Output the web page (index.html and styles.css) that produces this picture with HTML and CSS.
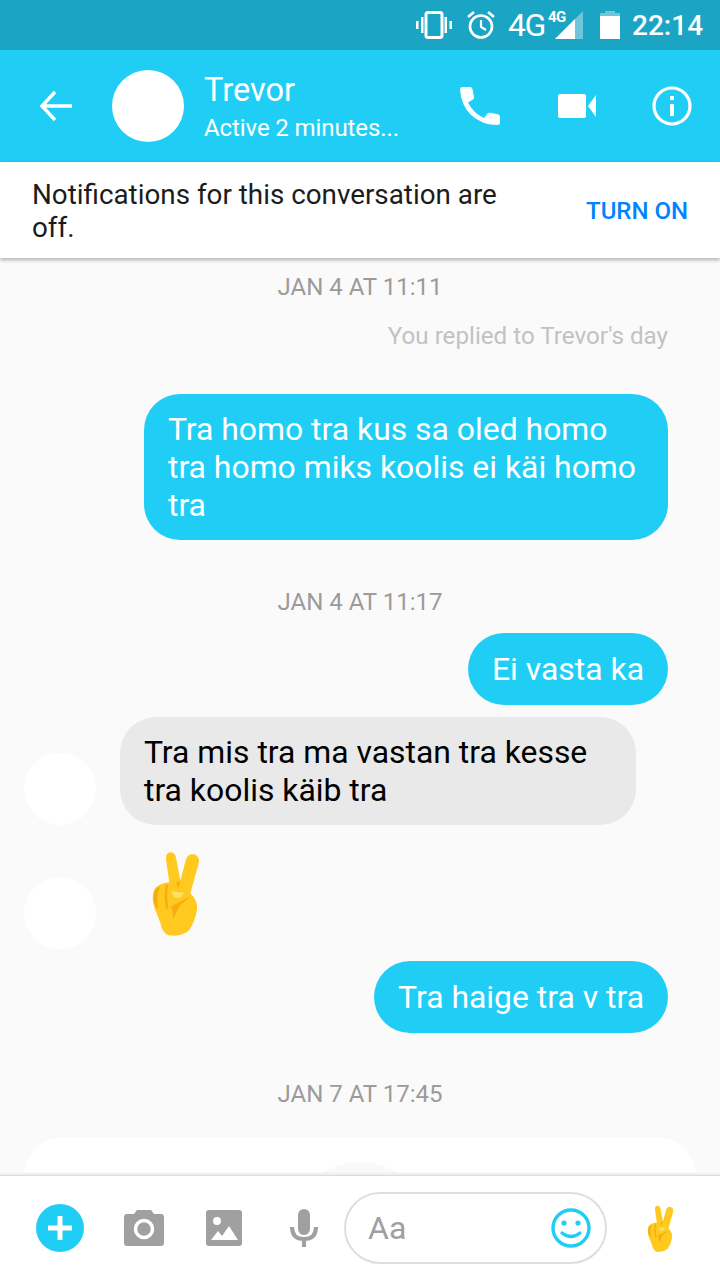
FILE: index.html
```html
<!DOCTYPE html>
<html lang="et">
<head>
    <meta charset="UTF-8">
    <meta name="viewport" content="width=device-width, initial-scale=1.0">
    <title>Trevor</title>
    <link rel="stylesheet" href="styles.css">
</head>
<body>
    <svg class="defs" width="0" height="0">
        <symbol id="peace" viewBox="0 0 270 315">
            <path fill="#ffc91f" d="M108 58Q106 38 122 37Q136 37 139 58L151 122L168 58Q174 40 192 43Q211 49 206 70L181 160Q204 182 201 208Q196 245 176 272Q150 292 116 286Q96 278 91 248L74 205Q64 178 72 150Q84 130 118 127Z"/>
            <path fill="#f5ae10" d="M151 122L145 148L139 128ZM84 142Q70 150 70 175Q72 195 80 205L86 206Q76 175 90 140Z"/>
            <path fill="#f5ae10" d="M108 132Q100 165 108 206L116 206Q108 170 114 136ZM122 200L184 168L150 196L130 236L126 208Z"/>
            <path fill="#ffdf66" d="M124 154L164 158L152 172L134 174Z"/>
        </symbol>
    </svg>

    <div class="status-bar">
        <svg class="ic-vibrate" width="36" height="28" viewBox="0 0 36 28">
            <rect x="10" y="1.500" width="16" height="25" rx="2" fill="none" stroke="#fff" stroke-width="3"/>
            <path fill="#fff" d="M0 10h2.500v8H0zM5 6h2.500v16H5zM28.500 6H31v16h-2.500zM33.500 10H36v8h-2.500z"/>
        </svg>
        <svg class="ic-alarm" width="28" height="28" viewBox="0 0 28 28">
            <circle cx="14" cy="15.500" r="11" fill="none" stroke="#fff" stroke-width="2.600"/>
            <path d="M14 9v7l5 3" fill="none" stroke="#fff" stroke-width="2.200"/>
            <path d="M1 6l6-5M27 6l-6-5" fill="none" stroke="#fff" stroke-width="2.600"/>
        </svg>
        <span class="net">4G</span>
        <span class="net-small">4G</span>
        <svg class="ic-signal" width="28" height="28" viewBox="0 0 28 28">
            <path fill="#6fc6da" d="M28 0v28H0z"/>
            <path fill="#fff" d="M20 8v20H0z"/>
        </svg>
        <svg class="ic-battery" width="20" height="28" viewBox="0 0 20 28">
            <path fill="#6fc6da" d="M5 0h10v2h5v4H0V2h5z"/>
            <path fill="#fff" d="M0 5h20v23H0z"/>
        </svg>
        <span class="clock">22:14</span>
    </div>

    <div class="top-bar">
        <svg class="ic-back" width="34" height="32" viewBox="0 0 34 32">
            <path d="M16 2L3 16l13 14M3 16h30" fill="none" stroke="#fff" stroke-width="3.400"/>
        </svg>
        <div class="top-avatar"></div>
        <div class="top-title">
            <div class="top-name">Trevor</div>
            <div class="top-active">Active 2 minutes...</div>
        </div>
        <svg class="ic-phone" width="40" height="38" viewBox="0 0 40 38">
            <path fill="#fff" d="M2 0h8q2 0 2.500 2l1.500 8q.2 1.500-1 2.600L8 15.500Q13 26 24 31l3.500-4.500q1.200-1 2.500-.7l8 1.500q2 .5 2 2.500V36q0 2-2.500 2Q22 38 11 28 1 18 0 2.500 0 0 2 0z"/>
        </svg>
        <svg class="ic-video" width="38" height="24" viewBox="0 0 38 24">
            <rect width="28" height="24" rx="2" fill="#fff"/>
            <path fill="#fff" d="M30 12L38 1v22z"/>
        </svg>
        <svg class="ic-info" width="40" height="40" viewBox="0 0 40 40">
            <circle cx="20" cy="20" r="18" fill="none" stroke="#fff" stroke-width="3.200"/>
            <path fill="#fff" d="M18 10h4v4h-4zM18 18h4v12h-4z"/>
        </svg>
    </div>

    <div class="notice">
        <div class="notice-text">Notifications for this conversation are off.</div>
        <div class="notice-btn">TURN ON</div>
    </div>

    <div class="chat">
        <div class="date date-first">JAN 4 AT 11:11</div>
        <div class="replied">You replied to Trevor's day</div>
        <div class="row row-me row-m1">
            <div class="bubble bubble-me bubble-wide">Tra homo tra kus sa oled homo tra homo miks koolis ei käi homo tra</div>
        </div>
        <div class="date date-second">JAN 4 AT 11:17</div>
        <div class="row row-me row-m2">
            <div class="bubble bubble-me">Ei vasta ka</div>
        </div>
        <div class="row row-them row-m3">
            <div class="avatar"></div>
            <div class="bubble bubble-them">Tra mis tra ma vastan tra kesse tra koolis käib tra</div>
        </div>
        <div class="row row-them row-m4">
            <div class="avatar avatar-hand"></div>
            <svg class="hand-big" width="90" height="105"><use href="#peace"/></svg>
        </div>
        <div class="row row-me row-m5">
            <div class="bubble bubble-me">Tra haige tra v tra</div>
        </div>
        <div class="date date-third">JAN 7 AT 17:45</div>
        <div class="share-card">
            <div class="share-avatar"></div>
        </div>
    </div>

    <div class="composer">
        <svg class="ic-plus" width="48" height="48" viewBox="0 0 48 48">
            <circle cx="24" cy="24" r="24" fill="#20cef5"/>
            <path d="M24 12v24M12 24h24" stroke="#fff" stroke-width="5"/>
        </svg>
        <svg class="ic-camera" width="40" height="36" viewBox="0 0 40 36">
            <path fill="#a0a0a0" d="M3 4h7l3-4h14l3 4h7q3 0 3 3v26q0 3-3 3H3q-3 0-3-3V7q0-3 3-3z"/>
            <circle cx="20" cy="19" r="8.500" fill="none" stroke="#fff" stroke-width="3.500"/>
        </svg>
        <svg class="ic-image" width="36" height="36" viewBox="0 0 36 36">
            <rect width="36" height="36" rx="3" fill="#a0a0a0"/>
            <circle cx="11" cy="11" r="4" fill="#fff"/>
            <path fill="#fff" d="M5 30l7-9 4 5 7-10 9 14z"/>
        </svg>
        <svg class="ic-mic" width="28" height="38" viewBox="0 0 28 38">
            <rect x="8" y="0" width="12" height="26" rx="6" fill="#a0a0a0"/>
            <path d="M2 18q0 12 12 12t12-12M14 30v8" fill="none" stroke="#a0a0a0" stroke-width="4"/>
        </svg>
        <div class="input">
            <span class="input-hint">Aa</span>
            <svg class="ic-smile" width="40" height="40" viewBox="0 0 40 40">
                <circle cx="20" cy="20" r="18" fill="none" stroke="#20cef5" stroke-width="3.400"/>
                <circle cx="13" cy="15" r="2.600" fill="#20cef5"/>
                <circle cx="27" cy="15" r="2.600" fill="#20cef5"/>
                <path d="M11 25q9 7 18 0" fill="none" stroke="#20cef5" stroke-width="3.200" stroke-linecap="round"/>
            </svg>
        </div>
        <svg class="hand-small" width="50" height="58"><use href="#peace"/></svg>
    </div>
</body>
</html>
```

FILE: styles.css
```css
html, body {
    margin: 0;
    padding: 0;
}

body {
    width: 720px;
    height: 1280px;
    overflow: hidden;
    display: flex;
    flex-direction: column;
    background: #fafafa;
    font-family: Roboto, "Liberation Sans", sans-serif;
}

svg {
    display: block;
    flex-shrink: 0;
}

.defs {
    position: absolute;
}

/* status bar */
.status-bar {
    height: 50px;
    background: #1aa5c4;
    color: #fff;
    display: flex;
    align-items: center;
    padding-left: 416px;
    box-sizing: border-box;
}

.ic-alarm { margin-left: 15px; }
.ic-signal { margin-left: -10px; }
.ic-battery { margin-left: 17px; }

.net {
    margin-left: 13px;
    font-size: 32px;
    width: 38px;
    letter-spacing: -1.500px;
}

.net-small {
    font-size: 15px;
    font-weight: 700;
    width: 17px;
    margin-bottom: 16px;
    margin-left: 2px;
    letter-spacing: -0.500px;
}

.clock {
    margin-left: 12px;
    font-size: 28px;
    font-weight: 500;
}

/* top bar */
.top-bar {
    height: 112px;
    background: #20cef5;
    color: #fff;
    display: flex;
    align-items: center;
}

.ic-back { margin-left: 39px; }

.top-avatar {
    width: 72px;
    height: 72px;
    margin-left: 39px;
    border-radius: 50%;
    background: #fff;
    flex-shrink: 0;
}

.top-title {
    width: 256px;
    margin-left: 20px;
    padding-top: 2px;
}

.top-name {
    font-size: 32.500px;
    line-height: 38px;
}

.top-active {
    font-size: 24px;
    line-height: 30px;
    margin-top: 4px;
    letter-spacing: -0.100px;
}

.ic-video { margin-left: 58px; }
.ic-info { margin-left: 56px; }

/* notification strip */
.notice {
    height: 96px;
    box-sizing: border-box;
    background: #fff;
    box-shadow: 0 2px 4px rgba(0, 0, 0, 0.3);
    display: flex;
    align-items: center;
    justify-content: space-between;
    padding: 2px 32px 0 32px;
    position: relative;
}

.notice-text {
    width: 500px;
    font-size: 27.800px;
    line-height: 33px;
    color: #1c1c1c;
}

.notice-btn {
    font-size: 24px;
    font-weight: 500;
    color: #0084ff;
    white-space: nowrap;
}

/* messages */
.chat {
    flex: 1;
    overflow: hidden;
    display: flex;
    flex-direction: column;
    min-height: 0;
}

.date {
    text-align: center;
    font-size: 24px;
    line-height: 30px;
    color: #9b9b9b;
    flex-shrink: 0;
}

.date-first { margin-top: 14px; }
.date-second { margin-top: 47px; }
.date-third { margin-top: 46px; }

.replied {
    margin-top: 19px;
    padding-right: 52px;
    text-align: right;
    font-size: 24.200px;
    line-height: 30px;
    color: #c2c2c2;
}

.row {
    display: flex;
    flex-shrink: 0;
}

.row-me {
    justify-content: flex-end;
    padding-right: 52px;
}

.row-them {
    align-items: flex-end;
    padding-left: 24px;
}

.row-m1 { margin-top: 43px; }
.row-m2 { margin-top: 16px; }
.row-m3 { margin-top: 12px; }
.row-m4 { margin-top: 15px; }
.row-m5 { margin-top: 12px; }

.bubble {
    box-sizing: border-box;
    padding: 16px 24px;
    border-radius: 36px;
    font-size: 31.900px;
    line-height: 38px;
}

.bubble-me {
    background: #20cef5;
    color: #fff;
    min-height: 72px;
    padding-top: 17px;
}

.bubble-wide {
    width: 524px;
    padding-top: 16px;
}

.bubble-them {
    width: 516px;
    margin-left: 24px;
    background: #e9e9e9;
    color: #000;
}

.avatar {
    width: 72px;
    height: 72px;
    border-radius: 50%;
    background: #fff;
    flex-shrink: 0;
}

.hand-big {
    margin-left: 34px;
    margin-bottom: 4px;
}

.share-card {
    margin: 28px 24px 0;
    height: 120px;
    background: #fff;
    border-radius: 40px 40px 0 0;
    display: flex;
    justify-content: center;
    padding-top: 25px;
    flex-shrink: 0;
}

.share-avatar {
    width: 144px;
    height: 144px;
    border-radius: 50%;
    background: #f9f9f9;
}

/* bottom input */
.composer {
    height: 105px;
    box-sizing: border-box;
    background: #fff;
    border-top: 1px solid #dcdcdc;
    box-shadow: 0 -2px 1px #efefef;
    display: flex;
    align-items: center;
    padding-left: 36px;
    position: relative;
    padding-bottom: 1px;
}

.ic-camera { margin-left: 40px; }
.ic-image { margin-left: 42px; }
.ic-mic { margin-left: 48px; }

.input {
    width: 263px;
    height: 72px;
    box-sizing: border-box;
    margin-left: 26px;
    padding: 0 14px 0 22px;
    border: 2px solid #dedede;
    border-radius: 36px;
    display: flex;
    align-items: center;
    justify-content: space-between;
    flex-shrink: 0;
}

.input-hint {
    font-size: 32px;
    color: #a0a0a0;
}

.hand-small { margin-left: 28px; }
```
